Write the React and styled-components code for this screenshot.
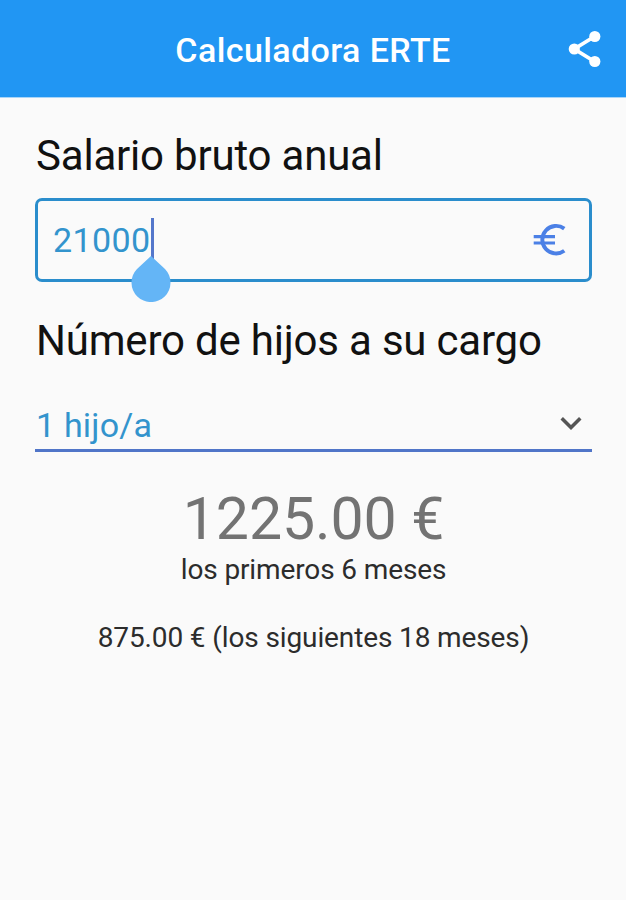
import React, { useState } from 'react';
import styled, { createGlobalStyle } from 'styled-components';
import { MdExpandMore } from 'react-icons/md';

const GlobalStyle = createGlobalStyle`
  * { box-sizing: border-box; }
  body {
    margin: 0;
    background: #fafafa;
    font-family: Roboto, "Liberation Sans", sans-serif;
  }
`;
const Page = styled.div`
  min-height: 900px;
  background: #fafafa;
`;
const Header = styled.header`
  display: grid;
  grid-template-columns: 1fr auto 1fr;
  align-items: center;
  height: 98px;
  padding: 0 24px;
  background: #2196f3;
  border-bottom: 1px solid #a9d5f8;
  color: #fff;
`;
const Title = styled.h1`
  grid-column: 2;
  margin: 3px 0 0;
  font-size: 34px;
  font-weight: 500;
  line-height: 40px;
  letter-spacing: 0.4px;
`;
const IconButton = styled.button`
  display: flex;
  justify-self: end;
  padding: 0;
  border: none;
  background: none;
  color: inherit;
  cursor: pointer;
`;
const Form = styled.main`
  display: flex;
  flex-direction: column;
  padding: 33px 34px 0 35px;
`;
const Label = styled.label`
  padding-left: 1px;
  font-size: 42px;
  line-height: 50px;
  letter-spacing: -0.2px;
  color: #111;
  white-space: nowrap;
`;
const Field = styled.div`
  display: flex;
  align-items: center;
  justify-content: space-between;
  height: 84px;
  margin: 17px 0 34px;
  padding: 0 22px 0 15px;
  border: 3px solid #2a8dcc;
  border-radius: 7px;
  color: #4b80e6;
`;
const Amount = styled.div`
  display: flex;
  align-items: center;
  font-size: 34px;
  line-height: 40px;
  letter-spacing: 0.4px;
  color: #3394cd;
`;
const Caret = styled.span`
  position: relative;
  width: 3px;
  height: 42px;
  margin-bottom: 3px;
  background: #5477cb;
`;
// drag handle hangs below the caret, over the border
const Handle = styled.svg`
  position: absolute;
  top: 38px;
  left: -20px;
  width: 40px;
  height: 46px;
  fill: #64b5f6;
`;
const Select = styled.div`
  display: flex;
  align-items: center;
  justify-content: space-between;
  height: 55px;
  margin-top: 31px;
  padding: 4px 0 0 1px;
  border-bottom: 3px solid #5075c8;
  font-size: 34px;
  letter-spacing: 0.2px;
  color: #3394cd;
`;
const Arrow = styled(MdExpandMore)`
  margin-bottom: 5px;
  font-size: 42px;
  color: #555;
`;
const Result = styled.section`
  display: flex;
  flex-direction: column;
  align-items: center;
  margin-top: 32px;
`;
const Total = styled.p`
  margin: 0;
  font-size: 59px;
  line-height: 70px;
  letter-spacing: -0.1px;
  color: #737373;
`;
const Detail = styled.p`
  margin: ${({ $top }) => $top || '-1px'} 0 0;
  font-size: 28px;
  line-height: 34px;
  letter-spacing: -0.12px;
  color: #2c2c2c;
  white-space: nowrap;
`;

function ShareIcon() {
  return (
    <svg width="34" height="38" viewBox="0 0 34 38" fill="currentColor">
      <path d="M26.5 6.5L6.3 19L26.5 31.5" fill="none" stroke="currentColor" strokeWidth="3.8" />
      <circle cx="6.3" cy="19" r="5.6" />
      <circle cx="26.8" cy="6.5" r="5.6" />
      <circle cx="26.8" cy="31.5" r="5.6" />
    </svg>
  );
}

function EuroIcon() {
  return (
    <svg width="34" height="34" viewBox="0 0 34 34" fill="none" stroke="currentColor">
      <path d="M31.3 5.6A13.8 13.8 0 1 0 31.3 27.8" strokeWidth="3.9" />
      <path d="M0.7 13.7H22M0.7 20H22" strokeWidth="3.2" />
    </svg>
  );
}

function App() {
  const [salary] = useState(21000);
  const [children] = useState(1);
  const monthly = salary / 12;

  return (
    <Page>
      <GlobalStyle />
      <Header>
        <Title>Calculadora ERTE</Title>
        <IconButton type="button"><ShareIcon /></IconButton>
      </Header>
      <Form>
        <Label>Salario bruto anual</Label>
        <Field>
          <Amount>
            {salary}
            <Caret>
              <Handle viewBox="0 0 40 46">
                <path d="M20 0L34 13A19.5 19.5 0 1 1 6 13Z" />
              </Handle>
            </Caret>
          </Amount>
          <EuroIcon />
        </Field>
        <Label>Número de hijos a su cargo</Label>
        <Select>
          {`${children} hijo/a`}
          <Arrow />
        </Select>
        <Result>
          <Total>{`${(monthly * 0.7).toFixed(2)} €`}</Total>
          <Detail>los primeros 6 meses</Detail>
          <Detail $top="34px">{`${(monthly * 0.5).toFixed(2)} € (los siguientes 18 meses)`}</Detail>
        </Result>
      </Form>
    </Page>
  );
}

export default App;
